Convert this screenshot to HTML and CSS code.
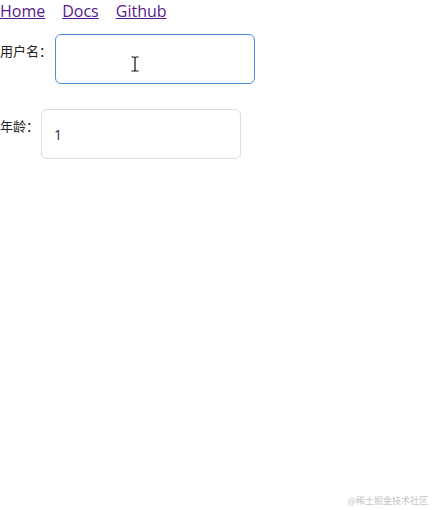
FILE: index.html
```html
<!DOCTYPE html>
<html>
<head>
<meta charset="utf-8">
<link rel="stylesheet" href="styles.css">
</head>
<body>
<nav class="nav">
  <a href="#home" class="link">Home</a>
  <a href="#docs" class="link">Docs</a>
  <a href="#github" class="link">Github</a>
</nav>
<form class="form">
  <div class="row row-name">
    <label class="label">用户名：</label>
    <div class="field-wrap">
      <input class="field field-focus" type="text">
      <svg class="cursor" width="10" height="16" viewBox="0 0 10 16">
        <path d="M1.5 1 H4 M6 1 H8.5 M4 1 Q5 1 5 2.5 V13.5 Q5 15 4 15 M6 1 Q5 1 5 2.5 M5 13.5 Q5 15 6 15 M1.5 15 H4 M6 15 H8.5" fill="none" stroke="#111" stroke-width="1.2"/>
      </svg>
    </div>
  </div>
  <div class="row row-age">
    <label class="label">年龄：</label>
    <input class="field" type="text" value="1">
  </div>
</form>
<div class="watermark">@稀土掘金技术社区</div>
</body>
</html>
```
FILE: styles.css
```css
html, body {
  margin: 0;
  padding: 0;
  background: #fff;
}
body {
  width: 432px;
  height: 510px;
  position: relative;
  overflow: hidden;
}
.nav {
  display: flex;
  gap: 17px;
  line-height: 22px;
  font-family: "Open Sans", sans-serif;
  font-size: 16px;
}
.link {
  color: #551a8b;
  text-decoration: underline;
}
.form {
  margin-top: 12px;
  display: flex;
  flex-direction: column;
  gap: 25px;
  font-family: "Noto Sans CJK SC", "Noto Sans", sans-serif;
}
.row {
  display: flex;
  align-items: flex-start;
}
.label {
  font-size: 13px;
  line-height: 17px;
  color: #222;
  padding-top: 8px;
}
.row-name .label {
  margin-right: 3px;
}
.row-age .label {
  margin-right: 2px;
}
.field-wrap {
  position: relative;
}
.field {
  box-sizing: border-box;
  width: 200px;
  height: 50px;
  margin: 0;
  border: 1px solid #dcdcdc;
  border-radius: 6px;
  padding: 0 12px;
  font-family: "Open Sans", Arial, sans-serif;
  font-size: 14px;
  color: #333;
  outline: none;
  background: #fff;
}
.field-focus {
  border-color: #4a8fd6;
}
.cursor {
  position: absolute;
  left: 75px;
  top: 22px;
}
.watermark {
  position: absolute;
  right: 4px;
  bottom: 3px;
  font-family: "Noto Sans CJK SC", sans-serif;
  font-size: 9px;
  color: #c4c4c4;
}
```
